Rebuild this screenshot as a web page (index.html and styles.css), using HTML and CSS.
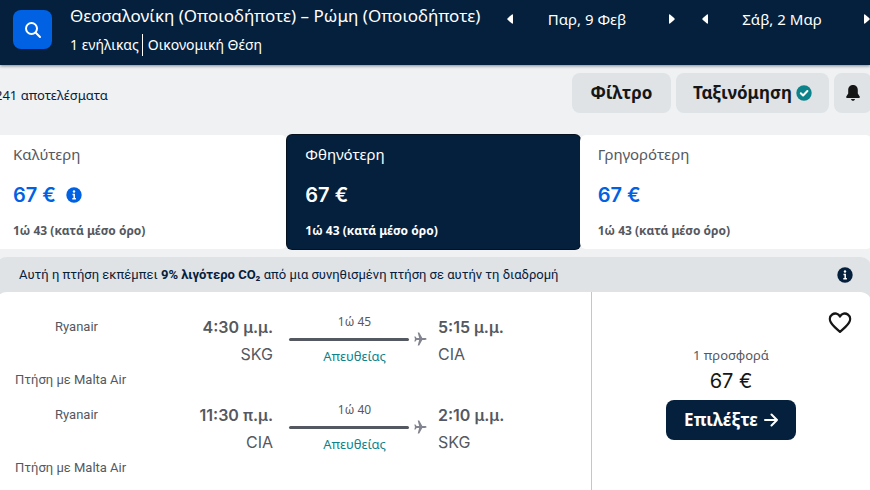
FILE: index.html
```html
<!DOCTYPE html>
<html lang="el">

<head>
    <meta charset="UTF-8">
    <meta name="viewport" content="width=device-width, initial-scale=1.0">
    <title>Θεσσαλονίκη – Ρώμη</title>
    <link rel="stylesheet" href="styles.css">
</head>

<body>

    <header class="header">
        <button class="search-btn" type="button" aria-label="Αναζήτηση">
            <svg width="18" height="18" viewBox="0 0 18 18" fill="none" stroke="#fff" stroke-width="2" stroke-linecap="round">
                <circle cx="7.5" cy="7.5" r="5.5" />
                <path d="M11.8 11.8L16 16" />
            </svg>
        </button>
        <div class="trip">
            <h1>Θεσσαλονίκη (Οποιοδήποτε) – Ρώμη (Οποιοδήποτε)</h1>
            <p><span class="people">1 ενήλικας</span><span class="cabin">Οικονομική Θέση</span></p>
        </div>
        <div class="dates">
            <div class="date">
                <button type="button" aria-label="Προηγούμενη"><svg width="6" height="10" viewBox="0 0 6 10"><path d="M6 1v8q0 1-1 .5L.6 5.8Q0 5 .6 4.2L5 .5Q6 0 6 1z" /></svg></button>
                <span>Παρ, 9 Φεβ</span>
                <button type="button" aria-label="Επόμενη"><svg width="6" height="10" viewBox="0 0 6 10"><path d="M0 1v8q0 1 1 .5l4.4-3.7Q6 5 5.4 4.2L1 .5Q0 0 0 1z" /></svg></button>
            </div>
            <div class="date">
                <button type="button" aria-label="Προηγούμενη"><svg width="6" height="10" viewBox="0 0 6 10"><path d="M6 1v8q0 1-1 .5L.6 5.8Q0 5 .6 4.2L5 .5Q6 0 6 1z" /></svg></button>
                <span>Σάβ, 2 Μαρ</span>
                <button type="button" aria-label="Επόμενη"><svg width="6" height="10" viewBox="0 0 6 10"><path d="M0 1v8q0 1 1 .5l4.4-3.7Q6 5 5.4 4.2L1 .5Q0 0 0 1z" /></svg></button>
            </div>
        </div>
    </header>

    <main class="content">
        <div class="toolbar">
            <p class="count">241 αποτελέσματα</p>
            <button class="tool" type="button">Φίλτρο</button>
            <button class="tool" type="button">Ταξινόμηση
                <svg width="16" height="16" viewBox="0 0 16 16">
                    <circle cx="8" cy="8" r="7.7" fill="#0c838a" />
                    <path d="M4.8 8.2l2.3 2.3 4.3-4.5" fill="none" stroke="#fff" stroke-width="2" stroke-linecap="round" stroke-linejoin="round" />
                </svg>
            </button>
            <button class="tool bell" type="button" aria-label="Ειδοποίηση τιμής">
                <svg width="14" height="16" viewBox="0 0 14 16" fill="#161616">
                    <path d="M7 0C3.9 0 2.2 2.2 2.2 5v3.5L.3 11.6c-.4.7 0 1.4.8 1.4h11.8c.8 0 1.2-.7.8-1.4L11.8 8.5V5C11.8 2.2 10.1 0 7 0z" />
                    <path d="M5 14h4c-.2 1.2-1 1.8-2 1.8S5.2 15.2 5 14z" />
                </svg>
            </button>
        </div>

        <div class="tabs">
            <button class="tab" type="button">
                <span class="tab-name">Καλύτερη</span>
                <span class="tab-price">67 €
                    <svg width="16" height="16" viewBox="0 0 16 16">
                        <circle cx="8" cy="8" r="7.7" fill="#0062e3" />
                        <circle cx="8" cy="4.5" r="1.2" fill="#fff" />
                        <path d="M6.5 7.5h1.7v4M6.3 11.7h3.6" fill="none" stroke="#fff" stroke-width="1.5" />
                    </svg>
                </span>
                <span class="tab-time">1ώ 43 (κατά μέσο όρο)</span>
            </button>
            <button class="tab active" type="button">
                <span class="tab-name">Φθηνότερη</span>
                <span class="tab-price">67 €</span>
                <span class="tab-time">1ώ 43 (κατά μέσο όρο)</span>
            </button>
            <button class="tab" type="button">
                <span class="tab-name">Γρηγορότερη</span>
                <span class="tab-price">67 €</span>
                <span class="tab-time">1ώ 43 (κατά μέσο όρο)</span>
            </button>
        </div>

        <section class="result">
            <div class="eco">
                <p>Αυτή η πτήση εκπέμπει <b>9% λιγότερο CO₂</b> από μια συνηθισμένη πτήση σε αυτήν τη διαδρομή</p>
                <svg width="16" height="16" viewBox="0 0 16 16">
                    <circle cx="8" cy="8" r="7.7" fill="#05203c" />
                    <circle cx="8" cy="4.5" r="1.2" fill="#fff" />
                    <path d="M6.5 7.5h1.7v4M6.3 11.7h3.6" fill="none" stroke="#fff" stroke-width="1.5" />
                </svg>
            </div>
            <div class="ticket">
                <div class="legs">
                    <div class="leg">
                        <p class="airline">Ryanair</p>
                        <div class="stop from">
                            <p class="time">4:30 μ.μ.</p>
                            <p class="airport">SKG</p>
                        </div>
                        <div class="route">
                            <p class="duration">1ώ 45</p>
                            <div class="line">
                                <svg width="13" height="14" viewBox="0 0 13 14" fill="#81848f"><path d="M12.5 7c0 .6-.7.9-1.5.9H8.3L5.2 13.5H3.7L5.2 7.9H2.6L1.5 9.5H.3L1 7 .3 4.5h1.2l1.1 1.6h2.6L3.7.5h1.5l3.1 5.6H11c.8 0 1.5.3 1.5.9z" /></svg>
                            </div>
                            <p class="direct">Απευθείας</p>
                        </div>
                        <div class="stop">
                            <p class="time">5:15 μ.μ.</p>
                            <p class="airport">CIA</p>
                        </div>
                        <p class="operator">Πτήση με Malta Air</p>
                    </div>
                    <div class="leg">
                        <p class="airline">Ryanair</p>
                        <div class="stop from">
                            <p class="time">11:30 π.μ.</p>
                            <p class="airport">CIA</p>
                        </div>
                        <div class="route">
                            <p class="duration">1ώ 40</p>
                            <div class="line">
                                <svg width="13" height="14" viewBox="0 0 13 14" fill="#81848f"><path d="M12.5 7c0 .6-.7.9-1.5.9H8.3L5.2 13.5H3.7L5.2 7.9H2.6L1.5 9.5H.3L1 7 .3 4.5h1.2l1.1 1.6h2.6L3.7.5h1.5l3.1 5.6H11c.8 0 1.5.3 1.5.9z" /></svg>
                            </div>
                            <p class="direct">Απευθείας</p>
                        </div>
                        <div class="stop">
                            <p class="time">2:10 μ.μ.</p>
                            <p class="airport">SKG</p>
                        </div>
                        <p class="operator">Πτήση με Malta Air</p>
                    </div>
                </div>
                <div class="offer">
                    <button class="heart" type="button" aria-label="Αποθήκευση">
                        <svg width="24" height="22" viewBox="0 0 24 22" fill="none" stroke="#161616" stroke-width="2.3" stroke-linejoin="round">
                            <path d="M12 4.6C10.4 1.2 6.6.8 4.2 2.5 1.5 4.5 1.3 8 3 10.7c1.9 3 5.4 6.2 9 9.1 3.6-2.9 7.1-6.1 9-9.1 1.7-2.7 1.5-6.2-1.2-8.2C17.4.8 13.6 1.2 12 4.6z" />
                        </svg>
                    </button>
                    <p class="deals">1 προσφορά</p>
                    <p class="price">67 €</p>
                    <button class="select" type="button">Επιλέξτε
                        <svg width="14" height="14" viewBox="0 0 14 14" fill="none" stroke="#fff" stroke-width="2" stroke-linecap="round" stroke-linejoin="round">
                            <path d="M1 7h12M7.5 1.5L13 7l-5.5 5.5" />
                        </svg>
                    </button>
                </div>
            </div>
        </section>
    </main>

</body>

</html>
```
FILE: styles.css
```css
* {
    padding: 0;
    margin: 0;
    box-sizing: border-box;
}

body {
    font-family: "Noto Sans", sans-serif;
    font-size: 13px;
    line-height: 20px;
    color: #161616;
    background-color: #eff1f2;
    overflow: hidden;
}

button {
    font: inherit;
    color: inherit;
    background: none;
    border: none;
    cursor: pointer;
}

svg {
    display: block;
    flex-shrink: 0;
}

p,
h1 {
    white-space: nowrap;
}

/* header */
.header {
    display: flex;
    align-items: flex-start;
    height: 65px;
    padding-left: 13px;
    background-color: #05203c;
    color: #fff;
    box-shadow: 0 1px 3px rgba(5, 32, 60, 0.5);
}

.search-btn {
    display: flex;
    flex-shrink: 0;
    align-items: center;
    justify-content: center;
    width: 39px;
    height: 39px;
    margin-top: 10px;
    border-radius: 8px;
    background-color: #0062e3;
}

.trip {
    flex: 1;
    margin-left: 18px;
    padding-top: 6px;
}

.trip h1 {
    font-size: 17px;
    font-weight: 400;
    line-height: 20px;
}

.trip p {
    display: flex;
    margin-top: 8px;
    font-size: 14px;
    line-height: 22px;
}

.people {
    padding-right: 3px;
    border-right: 1px solid #fff;
}

.cabin {
    padding-left: 5px;
}

.dates {
    display: flex;
    flex-shrink: 0;
    gap: 27px;
    padding-top: 9px;
}

.date {
    display: flex;
    justify-content: space-between;
    align-items: center;
    width: 168px;
    font-size: 15px;
}

.date span {
    padding-right: 8px;
}

.date svg {
    fill: #fff;
}

/* filters */
.content {
    margin: 0 -2px 0 -5px;
}

.toolbar {
    display: flex;
    gap: 5px;
    padding: 8px 0 22px;
}

.count {
    flex: 1;
    padding-top: 12px;
    color: #05203c;
}

.tool {
    display: flex;
    align-items: center;
    justify-content: center;
    gap: 4px;
    min-width: 99px;
    height: 40px;
    padding: 0 17px;
    border-radius: 8px;
    background-color: #dfe3e6;
    font-size: 17px;
    font-weight: 700;
}

.bell {
    min-width: 0;
    padding: 0 12px;
}

/* tabs */
.tabs {
    display: grid;
    grid-template-columns: repeat(3, 1fr);
}

.tab {
    display: flex;
    flex-direction: column;
    height: 114px;
    padding: 9px 18px;
    border-radius: 6px;
    background-color: #fff;
    color: #545860;
    text-align: left;
}

.tab-name {
    font-size: 15px;
}

.tab-price {
    display: flex;
    align-items: center;
    gap: 10px;
    margin: 19px 0 14px;
    font-family: Inter, sans-serif;
    font-size: 20px;
    font-weight: 600;
    line-height: 24px;
    color: #0062e3;
}

.tab-time {
    font-size: 12px;
    font-weight: 700;
}

.active {
    background-color: #05203c;
    border-radius: 5px;
    box-shadow: 0 0 0 1px #06121f;
}

.active,
.active .tab-price {
    color: #fff;
}

/* result */
.result {
    margin-top: 8px;
    border-radius: 12px;
    background-color: #dfe3e6;
}

.eco {
    display: flex;
    align-items: center;
    justify-content: space-between;
    height: 35px;
    padding: 0 19px 0 24px;
    font-family: Roboto, "Noto Sans", sans-serif;
    color: #05203c;
}

.ticket {
    display: flex;
    height: 212px;
    border-radius: 12px;
    background-color: #fff;
}

.legs {
    flex: 1;
    padding: 20px 20px 0;
    color: #545860;
}

.leg {
    display: grid;
    grid-template-columns: 110px 148px 154px 1fr;
    grid-template-rows: 58px 20px;
    height: 88px;
}

.airline {
    padding: 5px 0 0 40px;
    font-family: Roboto, sans-serif;
}

.stop {
    padding: 2px 0 0 11px;
    font-family: Inter, sans-serif;
    font-size: 16px;
}

.from {
    padding-left: 0;
    text-align: right;
}

.time {
    height: 27px;
    line-height: 27px;
    font-weight: 600;
}

.airport {
    height: 27px;
    line-height: 27px;
}

.route {
    padding-left: 16px;
    text-align: center;
}

.duration,
.direct {
    padding-right: 7px;
}

.duration {
    font-size: 12px;
}

.line {
    display: flex;
    align-items: center;
    gap: 5px;
    height: 14px;
}

.line::before {
    content: "";
    width: 120px;
    height: 3px;
    border-radius: 2px;
    background-color: #545860;
}

.direct {
    color: #0c838a;
}

.operator {
    grid-column: 1 / -1;
    font-family: Roboto, "Noto Sans", sans-serif;
}

.offer {
    display: flex;
    flex-direction: column;
    align-items: center;
    width: 281px;
    padding: 20px 2px 0 0;
    border-left: 1px solid #c1c7cf;
}

.heart {
    align-self: flex-end;
    margin-right: 18px;
}

.deals {
    margin-top: 11px;
    color: #545860;
}

.price {
    margin: 4px 0 7px;
    font-family: Inter, sans-serif;
    font-size: 20px;
    line-height: 24px;
}

.select {
    display: flex;
    align-items: center;
    gap: 6px;
    height: 40px;
    padding: 0 18px;
    border-radius: 8px;
    background-color: #05203c;
    color: #fff;
    font-size: 17px;
    font-weight: 700;
}
```
